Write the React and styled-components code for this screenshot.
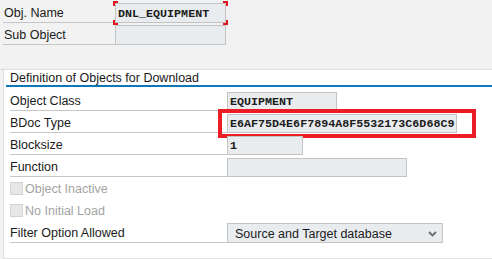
import styled, { createGlobalStyle } from 'styled-components'

const GlobalStyle = createGlobalStyle`
  html, body {
    margin: 0;
    padding: 0;
    background: #f2f2f2;
    overflow: hidden;
  }
  body {
    font-family: "Liberation Sans", Arial, sans-serif;
    font-size: 12.5px;
    color: #1a1a1a;
  }
`

const StyledPage = styled.div`
  display: flex;
  flex-direction: column;
  width: 492px;
  height: 259px;
  background: #f2f2f2;
`

const StyledHeader = styled.div`
  display: flex;
  flex-direction: column;
  height: 68px;
  padding: 1px 0 0 3px;
  border-bottom: 1px solid #dedede;
`

const StyledRow = styled.div`
  display: flex;
  align-items: flex-end;
  height: 22px;
`

const StyledLabel = styled.div`
  box-sizing: border-box;
  display: flex;
  align-items: flex-end;
  width: ${p => p.$width}px;
  height: 22px;
  padding: 0 0 1px ${p => p.$indent || 0}px;
  border-bottom: ${p => (p.$plain ? '1px solid transparent' : '1px solid #c6c6c6')};
  color: ${p => (p.$disabled ? '#a3a3a3' : '#1a1a1a')};
  line-height: 15px;
  white-space: nowrap;
`

const StyledField = styled.div`
  position: relative;
  box-sizing: border-box;
  display: flex;
  align-items: center;
  width: ${p => p.$width}px;
  height: ${p => p.$height || 19}px;
  padding: 1px 2px 0;
  background: #e9ecef;
  border: 1px solid #c3c3c3;
  font-family: "Liberation Mono", "Courier New", monospace;
  font-size: 11.7px;
  font-weight: bold;
  color: #1c1c1c;
  white-space: nowrap;
`

const StyledFocus = styled.span`
  position: absolute;
  inset: -3px;
  pointer-events: none;
  background:
    linear-gradient(#e0141c, #e0141c) left top / 5px 2px no-repeat,
    linear-gradient(#e0141c, #e0141c) left top / 2px 5px no-repeat,
    linear-gradient(#e0141c, #e0141c) right top / 5px 2px no-repeat,
    linear-gradient(#e0141c, #e0141c) right top / 2px 5px no-repeat,
    linear-gradient(#e0141c, #e0141c) left bottom / 5px 2px no-repeat,
    linear-gradient(#e0141c, #e0141c) left bottom / 2px 5px no-repeat,
    linear-gradient(#e0141c, #e0141c) right bottom / 5px 2px no-repeat,
    linear-gradient(#e0141c, #e0141c) right bottom / 2px 5px no-repeat;
`

const StyledMarker = styled.span`
  position: absolute;
  left: -10px;
  right: -20px;
  top: -6px;
  bottom: -6px;
  border: 4px solid #ec1c24;
  pointer-events: none;
`

const StyledPanel = styled.div`
  flex: 1;
  display: flex;
  flex-direction: column;
  margin-left: 3px;
  background: #ffffff;
  border-left: 1px solid #dedede;
  border-bottom: 1px solid #e2e2e2;
`

const StyledTitle = styled.div`
  box-sizing: border-box;
  height: 17px;
  margin-left: 2px;
  padding: 1px 0 0 4px;
  border-bottom: 2px solid #0b78b8;
  line-height: 14px;
  white-space: nowrap;
`

const StyledRows = styled.div`
  display: flex;
  flex-direction: column;
  margin-top: 2px;
  padding-left: 6px;
`

const StyledCheck = styled.span`
  box-sizing: border-box;
  align-self: center;
  width: 13px;
  height: 13px;
  margin: 2px 2px 0 0;
  background: #e4e6e8;
  border: 1px solid #d3d3d3;
`

const StyledSelect = styled.div`
  box-sizing: border-box;
  display: flex;
  align-items: center;
  justify-content: space-between;
  width: 216px;
  height: 20px;
  padding: 1px 5px 0 7px;
  background: #e9ecef;
  border: 1px solid #c3c3c3;
  color: #1a1a1a;
  white-space: nowrap;
`

const Chevron = () => (
  <svg width="9" height="6" viewBox="0 0 9 6">
    <path d="M1 1 L4.5 4.5 L8 1" fill="none" stroke="#6b6b6b" strokeWidth="1.8" />
  </svg>
)

const fields = [
  { label: 'Object Class', value: 'EQUIPMENT', width: 110 },
  { label: 'BDoc Type', value: 'E6AF75D4E6F7894A8F5532173C6D68C9', width: 230, marked: true },
  { label: 'Blocksize', value: '1', width: 76 },
  { label: 'Function', value: '', width: 180 },
]

const App = () => (
  <StyledPage>
    <GlobalStyle />
    <StyledHeader>
      <StyledRow>
        <StyledLabel $width={112} $indent={1}>Obj. Name</StyledLabel>
        <StyledField $width={111} $height={20}>
          DNL_EQUIPMENT
          <StyledFocus />
        </StyledField>
      </StyledRow>
      <StyledRow>
        <StyledLabel $width={112} $indent={1}>Sub Object</StyledLabel>
        <StyledField $width={111} $height={20} />
      </StyledRow>
    </StyledHeader>
    <StyledPanel>
      <StyledTitle>Definition of Objects for Download</StyledTitle>
      <StyledRows>
        {fields.map(f => (
          <StyledRow key={f.label}>
            <StyledLabel $width={217}>{f.label}</StyledLabel>
            <StyledField $width={f.width}>
              {f.value}
              {f.marked && <StyledMarker />}
            </StyledField>
          </StyledRow>
        ))}
        <StyledRow>
          <StyledLabel $width={217} $plain $disabled>
            <StyledCheck />Object Inactive
          </StyledLabel>
        </StyledRow>
        <StyledRow>
          <StyledLabel $width={217} $plain $disabled>
            <StyledCheck />No Initial Load
          </StyledLabel>
        </StyledRow>
        <StyledRow>
          <StyledLabel $width={217}>Filter Option Allowed</StyledLabel>
          <StyledSelect>
            Source and Target database
            <Chevron />
          </StyledSelect>
        </StyledRow>
      </StyledRows>
    </StyledPanel>
  </StyledPage>
)

export default App
